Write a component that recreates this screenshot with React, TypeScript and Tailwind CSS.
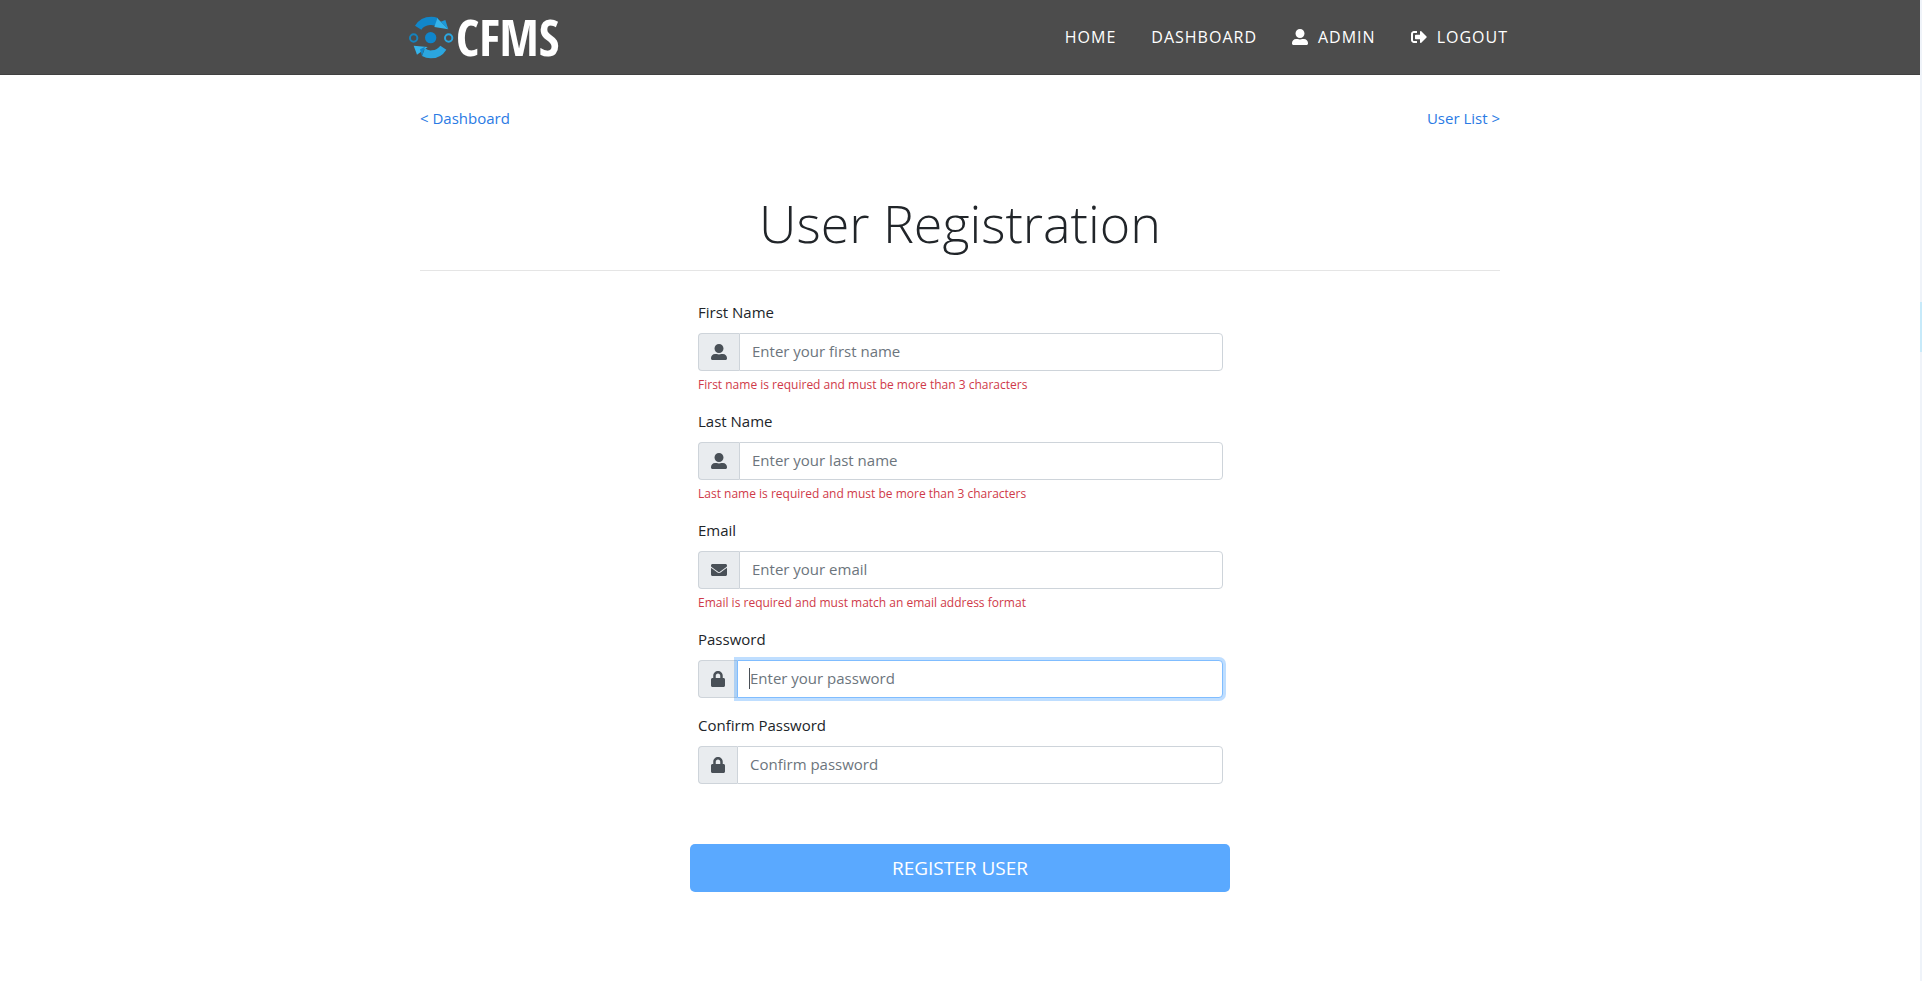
import type { ComponentType } from "react";
import { FaEnvelope, FaLock, FaSignOutAlt, FaUserAlt } from "react-icons/fa";

type Field = {
  id: string;
  label: string;
  placeholder: string;
  type: string;
  icon: ComponentType<{ className?: string }>;
  narrow?: boolean;
  error?: string;
  focused?: boolean;
};

const fields: Field[] = [
  {
    id: "first-name",
    label: "First Name",
    placeholder: "Enter your first name",
    type: "text",
    icon: FaUserAlt,
    error: "First name is required and must be more than 3 characters",
  },
  {
    id: "last-name",
    label: "Last Name",
    placeholder: "Enter your last name",
    type: "text",
    icon: FaUserAlt,
    error: "Last name is required and must be more than 3 characters",
  },
  {
    id: "email",
    label: "Email",
    placeholder: "Enter your email",
    type: "email",
    icon: FaEnvelope,
    error: "Email is required and must match an email address format",
  },
  {
    id: "password",
    label: "Password",
    placeholder: "Enter your password",
    type: "password",
    icon: FaLock,
    narrow: true,
    focused: true,
  },
  {
    id: "confirm-password",
    label: "Confirm Password",
    placeholder: "Confirm password",
    type: "password",
    icon: FaLock,
    narrow: true,
  },
];

function LogoMark() {
  return (
    <svg viewBox="24 45 138 135" className="h-[45px] w-[46px]" aria-hidden="true">
      <path d="M45 77 Q61 50 94 50 Q104 50 114 54 L111 80 Q103 74 90 75 Q72 77 64 89 Z" fill="#1187ca" />
      <path d="M112 55 L145 88 L103 81 Z" fill="#35b4ea" />
      <path d="M122 65 L136 60 L145 88 Z" fill="#1c98d8" />
      <path d="M139 149 Q123 175 92 175 Q78 175 66 168 L75 145 Q84 153 96 151 Q112 149 121 137 Z" fill="#2ba6df" />
      <path d="M41 137 L83 141 L51 164 Z" fill="#35b4ea" />
      <path d="M60 148 L75 140 L66 168 Z" fill="#1187ca" />
      <circle cx="92" cy="113" r="17" fill="#0f86cb" />
      <circle cx="41" cy="114" r="11" fill="none" stroke="#1583bd" strokeWidth="6" />
      <circle cx="146" cy="114" r="11" fill="none" stroke="#2ba6df" strokeWidth="6" />
    </svg>
  );
}

function Header() {
  return (
    <header className="border-b border-[#404040] bg-[#4c4c4c]">
      <div className="mx-auto flex h-[74px] max-w-[1104px] items-center justify-between pr-1">
        <a href="#" className="flex items-center gap-0.5 text-white">
          <LogoMark />
          <span className="font-['Open_Sans_Condensed',sans-serif] text-[50px] leading-none font-bold">CFMS</span>
        </a>
        <nav className="flex items-center gap-[35px] text-base leading-6 tracking-[1px] text-white">
          <a href="#">HOME</a>
          <a href="#">DASHBOARD</a>
          <a href="#" className="flex items-center gap-2.5">
            <FaUserAlt className="size-4" />
            ADMIN
          </a>
          <a href="#" className="flex items-center gap-2.5">
            <FaSignOutAlt className="size-4" />
            LOGOUT
          </a>
        </nav>
      </div>
    </header>
  );
}

function FormField({ field }: { field: Field }) {
  const Icon = field.icon;
  return (
    <div className="mb-4">
      <label htmlFor={field.id} className="mb-2.5 block leading-[22px]">
        {field.label}
      </label>
      <div className="flex h-[38px]">
        <span className="flex items-center rounded-l border border-r-0 border-[#ced4da] bg-[#e9ecef] px-3 text-[#495057]">
          <Icon className={field.narrow ? "h-4 w-3.5" : "size-4"} />
        </span>
        <div className="relative flex min-w-0 flex-1">
          <input
            id={field.id}
            type={field.type}
            placeholder={field.placeholder}
            autoFocus={field.focused}
            className="peer min-w-0 flex-1 rounded-r border border-[#ced4da] bg-white px-3 pb-0.5 text-[#495057] caret-transparent outline-none placeholder:text-[#6c757d] focus:border-[#80bdff] focus:shadow-[0_0_0_3px_rgba(0,123,255,0.25)]"
          />
          <span className="pointer-events-none absolute top-2 left-3 hidden h-[21px] w-px bg-[#495057] peer-focus:peer-placeholder-shown:block" />
        </div>
      </div>
      {field.error && <p className="mt-1 text-xs leading-[19px] text-[#cf3a49]">{field.error}</p>}
    </div>
  );
}

export default function App() {
  return (
    <div className="flex min-h-screen bg-white font-['Open_Sans','Noto_Sans',sans-serif] text-[15px] text-[#212529]">
      <div className="min-w-0 flex-1">
        <Header />
        <main className="mx-auto max-w-[1080px] pt-[31px]">
          <div className="flex justify-between leading-6 text-[#2a7ae4]">
            <a href="#">&lt; Dashboard</a>
            <a href="#">User List &gt;</a>
          </div>
          <h1 className="mt-[58px] mb-3 text-center text-[52px] leading-[70px] font-light">User Registration</h1>
          <hr className="mb-[30px] border-t border-black/10" />
          <form className="mx-auto max-w-[540px]" onSubmit={(e) => e.preventDefault()}>
            <div className="pr-[7px] pl-2">
              {fields.map((field) => (
                <FormField key={field.id} field={field} />
              ))}
            </div>
            <button type="submit" className="mt-11 h-12 w-full rounded-[5px] bg-[#5aa9ff] text-[19px] text-white">
              REGISTER USER
            </button>
          </form>
        </main>
      </div>
      <div className="flex w-0.5 flex-col bg-[#eff3f9]">
        <div className="mt-[302px] h-[50px] bg-[#c7eafa]" />
      </div>
    </div>
  );
}
